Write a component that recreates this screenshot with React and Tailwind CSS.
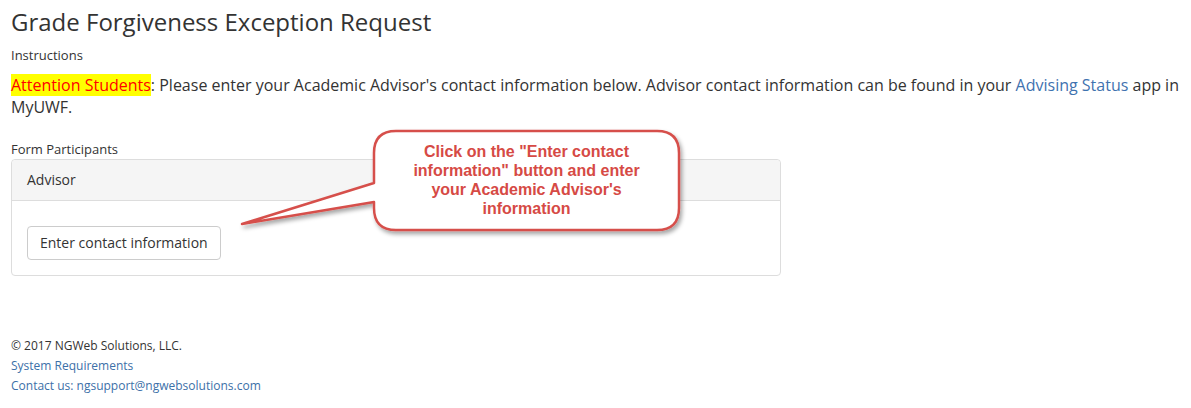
export default function App() {
    return (
        <div className="relative min-h-[408px] bg-white px-[11px] text-[#333] font-['Open_Sans',sans-serif]">

            {/* Page heading */}
            <h1 className="pt-[6px] text-[24px] leading-[32px] font-normal">Grade Forgiveness Exception Request</h1>
            <div className="mt-[8px] text-[13px] leading-[18px] font-medium">Instructions</div>

            <p className="mt-[10px] text-[16px] leading-[22px]">
                <span className="bg-[#ffff00] text-[#ff0000]">Attention Students</span>: Please enter your Academic Advisor's contact information below. Advisor contact information can be found in your{" "}
                <a className="text-[#3f72af]">Advising Status</a> app in MyUWF.
            </p>

            {/* Participants panel */}
            <div className="mt-[22px] text-[13px] leading-[18px] font-medium">Form Participants</div>
            <div className="mt-px w-[770px] rounded border border-[#ddd]">
                <div className="rounded-t border-b border-[#ddd] bg-[#f5f5f5] px-[15px] py-[10px] text-[14px] leading-[20px]">Advisor</div>
                <div className="px-[15px] pt-[25px] pb-[15px]">
                    <button className="rounded border border-[#ccc] bg-white px-[12px] py-[6px] text-[14px] leading-[20px] text-[#333]">
                        Enter contact information
                    </button>
                </div>
            </div>

            {/* Footer */}
            <div className="mt-[60px] text-[12px] leading-[20px]">
                <div>© 2017 NGWeb Solutions, LLC.</div>
                <div className="text-[#3c70a8]">System Requirements</div>
                <div className="text-[#3c70a8]">Contact us: ngsupport@ngwebsolutions.com</div>
            </div>

            {/* Callout annotation */}
            <svg className="absolute left-[230px] top-[120px]" width="470" height="130" viewBox="230 120 470 130">
                <defs>
                    <filter id="sh" x="-10%" y="-10%" width="130%" height="140%">
                        <feDropShadow dx="2" dy="3" stdDeviation="2" floodColor="#000" floodOpacity="0.35" />
                    </filter>
                </defs>
                <path
                    d="M 396 131 H 657 Q 679 131 679 153 V 208 Q 679 230 657 230 H 396 Q 374 230 374 208 V 202 L 242 224 L 374 183 V 153 Q 374 131 396 131 Z"
                    fill="#fff"
                    stroke="#d6504b"
                    strokeWidth="2.5"
                    strokeLinejoin="round"
                    filter="url(#sh)"
                />
            </svg>
            <div className="absolute left-[374px] top-[142px] w-[305px] text-center font-['Liberation_Sans',Arial,sans-serif] text-[16px] font-bold leading-[19px] text-[#d64a45]">
                Click on the "Enter contact<br />
                information" button and enter<br />
                your Academic Advisor's<br />
                information
            </div>
        </div>
    );
}
